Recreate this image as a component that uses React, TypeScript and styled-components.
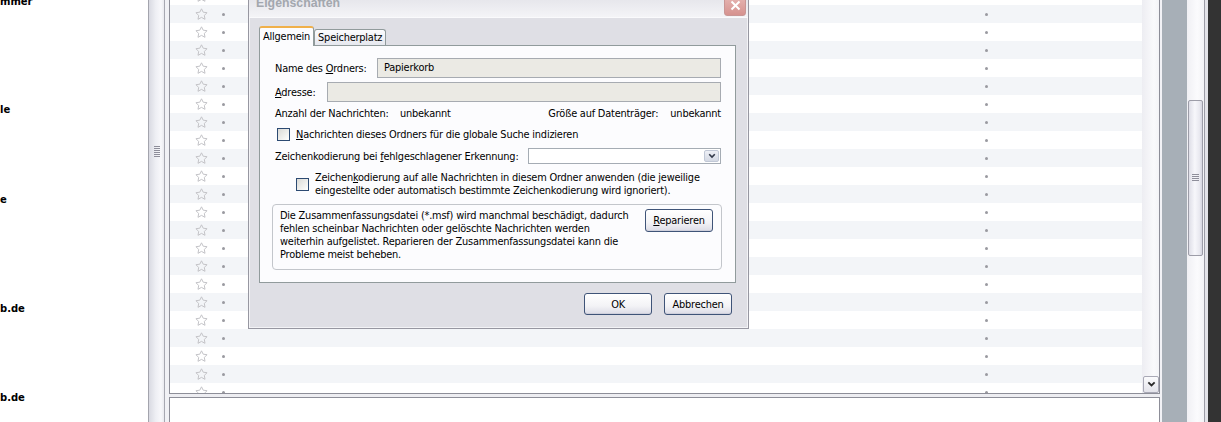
import React from "react";
import styled, { createGlobalStyle } from "styled-components";

const UI_FONT = `"DejaVu Sans", Tahoma, Verdana, sans-serif`;

const GlobalStyle = createGlobalStyle`
  html, body { margin: 0; padding: 0; overflow: hidden; background: #ffffff; }
  body { font-family: ${UI_FONT}; font-size: 9.8px; letter-spacing: -0.2px; color: #000000; }
`;

const Screen = styled.div`
  position: relative;
  display: flex;
  width: 1221px;
  height: 422px;
  overflow: hidden;
  background: #ffffff;
`;

/* ---------- folder pane ---------- */
const FolderPane = styled.div`
  flex: none;
  width: 148px;
  display: flex;
  flex-direction: column;
  overflow: hidden;
  background: #ffffff;
`;

const FolderName = styled.div<{ $space: number }>`
  flex: none;
  margin-top: ${(p) => p.$space}px;
  height: 18px;
  line-height: 18px;
  font-weight: bold;
  font-size: 10px;
  letter-spacing: 0;
  white-space: nowrap;
`;

/* ---------- vertical splitter ---------- */
const VSplitter = styled.div`
  flex: none;
  display: flex;
  width: 21px;
  box-sizing: border-box;
  border-left: 1px solid #a3a4ad;
  background: #f1f1f5;
`;

const GripBar = styled.div`
  flex: none;
  width: 16px;
  box-sizing: border-box;
  display: flex;
  justify-content: center;
  padding-top: 146px;
  background: linear-gradient(to right, #d9dae2, #eeeff4 45%, #f8f8fb 80%, #eaeaef);
  border-right: 1px solid #a7a8b1;
`;

/* ---------- main column ---------- */
const MainColumn = styled.div`
  flex: none;
  width: 991px;
  display: flex;
  flex-direction: column;
`;

const ThreadList = styled.div`
  flex: none;
  height: 394px;
  box-sizing: border-box;
  display: flex;
  border: 1px solid #8d8e98;
  border-top: none;
  background: #ffffff;
  overflow: hidden;
`;

const RowsViewport = styled.div`
  flex: 1;
  overflow: hidden;
`;

const RowsTrack = styled.div`
  display: flex;
  flex-direction: column;
  margin-top: -13px;
`;

const Row = styled.div<{ $alt: boolean }>`
  flex: none;
  display: flex;
  align-items: center;
  height: 18px;
  background: ${(p) => (p.$alt ? "#f3f5f8" : "#ffffff")};
`;

const StarCell = styled.span`
  flex: none;
  display: flex;
  width: 13px;
  height: 13px;
  margin-left: 25px;
`;

const Dot = styled.span<{ $gap: number }>`
  flex: none;
  width: 3px;
  height: 3px;
  border-radius: 50%;
  background: #9a9aa0;
  margin-left: ${(p) => p.$gap}px;
`;

const ListScrollbar = styled.div`
  flex: none;
  width: 17px;
  display: flex;
  flex-direction: column;
  justify-content: flex-end;
  background: linear-gradient(to right, #ededf2, #fafafc 70%, #f4f4f7);
`;

const ArrowButton = styled.div`
  flex: none;
  height: 17px;
  margin-left: 1px;
  box-sizing: border-box;
  display: flex;
  align-items: center;
  justify-content: center;
  border: 1px solid #a9a9b6;
  border-radius: 2px;
  background: linear-gradient(#fbfbfd, #e3e3ea);
`;

const HSplitter = styled.div`
  flex: none;
  height: 3px;
  background: #ededf1;
`;

const MessagePane = styled.div`
  flex: 1;
  box-sizing: border-box;
  border: 1px solid #8d8e98;
  border-bottom: none;
  background: #ffffff;
`;

/* ---------- right strip ---------- */
const SideGap = styled.div`
  flex: none;
  width: 2px;
  background: #f2f2f6;
`;

const SideBand = styled.div`
  flex: none;
  width: 25px;
  background: #a7afb7;
`;

const SideScroll = styled.div`
  flex: none;
  width: 17px;
  display: flex;
  flex-direction: column;
  background: linear-gradient(to right, #f0f0f4, #fbfbfd 60%, #f3f3f6);
`;

const SideThumb = styled.div`
  flex: none;
  height: 156px;
  margin: 100px 1px 0 1px;
  box-sizing: border-box;
  display: flex;
  align-items: center;
  justify-content: center;
  border: 1px solid #9d9da8;
  border-radius: 2px;
  background: linear-gradient(to right, #dedee7, #f7f7fb 45%, #e9e9f0 80%, #d6d6e0);
`;

const SideEdge = styled.div`
  flex: none;
  width: 4px;
  box-sizing: border-box;
  border-left: 1px solid #9c9ca6;
  background: #e3e3e8;
`;

const DarkEdge = styled.div`
  flex: 1;
  background: #333333;
`;

/* ---------- dialog ---------- */
const Dialog = styled.div`
  position: absolute;
  left: 248px;
  top: -7px;
  width: 501px;
  height: 336px;
  box-sizing: border-box;
  display: flex;
  flex-direction: column;
  border: 1px solid #9797a1;
  background: #dfdfe5;
  box-shadow: inset 0 0 0 1px #f3f3f6;
`;

const TitleBar = styled.div`
  flex: none;
  height: 24px;
  box-sizing: border-box;
  display: flex;
  align-items: flex-start;
  padding: 1px 2px 0 7px;
  background: linear-gradient(#e2e2e8, #f4f4f7);
  border-bottom: 1px solid #fafafc;
`;

const TitleText = styled.div`
  font-family: "Liberation Sans", Arial, sans-serif;
  font-weight: bold;
  font-size: 12.3px;
  letter-spacing: 0;
  line-height: 16px;
  color: #a3a7ae;
`;

const CloseButton = styled.div`
  flex: none;
  margin-left: auto;
  width: 22px;
  height: 21px;
  box-sizing: border-box;
  display: flex;
  align-items: center;
  justify-content: center;
  border: 1px solid #c99695;
  border-radius: 3px;
  background: linear-gradient(#e6b7b4, #d6928f);
`;

const DialogBody = styled.div`
  flex: 1;
  display: flex;
  flex-direction: column;
  padding: 8px 12px 0 10px;
`;

const TabStrip = styled.div`
  flex: none;
  height: 19px;
  display: flex;
  align-items: flex-end;
  position: relative;
  z-index: 1;
`;

const Tab = styled.div<{ $active?: boolean }>`
  flex: none;
  box-sizing: border-box;
  height: ${(p) => (p.$active ? 20 : 16)}px;
  margin-bottom: ${(p) => (p.$active ? -1 : 0)}px;
  padding: ${(p) => (p.$active ? "0 3px" : "0 3px")};
  line-height: ${(p) => (p.$active ? 17 : 15)}px;
  border: 1px solid #919b9c;
  border-bottom: none;
  border-top: ${(p) => (p.$active ? "2px solid #f0b04a" : "1px solid #919b9c")};
  border-radius: 3px 3px 0 0;
  background: ${(p) => (p.$active ? "#fcfcfe" : "linear-gradient(#fbfbfd, #e6e8ef)")};
  white-space: nowrap;
`;

const TabPanel = styled.div`
  flex: none;
  height: 238px;
  box-sizing: border-box;
  display: flex;
  flex-direction: column;
  padding: 12px 14px 0 15px;
  border: 1px solid #919b9c;
  background: #fcfcfe;
`;

const FieldRow = styled.div<{ $top: number; $h?: number }>`
  flex: none;
  display: flex;
  align-items: center;
  height: ${(p) => p.$h ?? 20}px;
  margin-top: ${(p) => p.$top}px;
  white-space: nowrap;
`;

const FieldLabel = styled.span<{ $w: number }>`
  flex: none;
  width: ${(p) => p.$w}px;
`;

const ReadOnlyInput = styled.div`
  flex: 1;
  height: 20px;
  box-sizing: border-box;
  padding-left: 6px;
  line-height: 18px;
  border: 1px solid #a7abb1;
  background: #ebeae4;
`;

const InfoGroup = styled.div<{ $push?: boolean }>`
  display: flex;
  gap: 12px;
  margin-left: ${(p) => (p.$push ? "auto" : "0")};
`;

const InfoLabel = styled.span<{ $w?: number }>`
  ${(p) => (p.$w ? `width: ${p.$w}px;` : "")}
`;

const CheckBox = styled.span<{ $indent: number }>`
  flex: none;
  width: 13px;
  height: 13px;
  box-sizing: border-box;
  margin-left: ${(p) => p.$indent}px;
  margin-right: 6px;
  border: 1px solid #2c4a72;
  background: linear-gradient(135deg, #dadad6, #f6f6f4 75%, #ffffff);
`;

const MultiLine = styled.div`
  line-height: 13px;
`;

const SelectBox = styled.div`
  flex: 1;
  height: 16px;
  box-sizing: border-box;
  display: flex;
  justify-content: flex-end;
  align-items: center;
  padding-right: 1px;
  border: 1px solid #a5acb4;
  background: #ffffff;
`;

const SelectButton = styled.div`
  flex: none;
  width: 15px;
  height: 12px;
  display: flex;
  align-items: center;
  justify-content: center;
  border-radius: 2px;
  background: linear-gradient(#eef0f6, #d4d9e4);
  border: 1px solid #c1c8d6;
  box-sizing: border-box;
`;

const GroupBox = styled.div`
  flex: none;
  height: 66px;
  margin: 7px -1px 0 -3px;
  box-sizing: border-box;
  display: flex;
  align-items: flex-start;
  padding: 4px 8px 0 7px;
  border: 1px solid #c3c6cb;
  border-radius: 4px;
`;

const GroupText = styled.div`
  flex: 1;
  line-height: 13px;
  white-space: nowrap;
`;

const PushButton = styled.div<{ $h?: number }>`
  flex: none;
  width: 68px;
  height: ${(p) => p.$h ?? 22}px;
  box-sizing: border-box;
  display: flex;
  align-items: center;
  justify-content: center;
  border: 1px solid #3f5478;
  border-radius: 3px;
  background: linear-gradient(#ffffff, #f3f3f6 60%, #dcdce6);
  box-shadow: inset 0 -1px 0 #cfd0dc;
  white-space: nowrap;
`;

const ButtonRow = styled.div`
  flex: none;
  display: flex;
  justify-content: flex-end;
  gap: 12px;
  margin-top: 10px;
  padding-right: 4px;
`;

/* ---------- icons ---------- */
const StarIcon = () => (
  <svg width="13" height="13" viewBox="0 0 13 13">
    <polygon
      points="6.5,0.8 8.2,4.2 12.1,4.7 9.3,7.4 10,11.3 6.5,9.4 3,11.3 3.7,7.4 0.9,4.7 4.8,4.2"
      fill="none"
      stroke="#c4c4c8"
      strokeWidth="1"
      strokeLinejoin="round"
    />
  </svg>
);

const Chevron = ({ size = 10, color = "#2a2a2a" }: { size?: number; color?: string }) => (
  <svg width={size} height={size * 0.7} viewBox="0 0 10 7">
    <path d="M1.5 1.5 L5 5 L8.5 1.5" fill="none" stroke={color} strokeWidth="2" />
  </svg>
);

const GripLines = ({ w, count }: { w: number; count: number }) => (
  <svg width={w} height={count * 2} viewBox={`0 0 ${w} ${count * 2}`}>
    {Array.from({ length: count }, (_, i) => (
      <rect key={i} x="0" y={i * 2} width={w} height="1" fill="#8e8e9a" />
    ))}
  </svg>
);

const CloseX = () => (
  <svg width="11" height="11" viewBox="0 0 11 11">
    <path d="M1.5 1.5 L9.5 9.5 M9.5 1.5 L1.5 9.5" stroke="#ffffff" strokeWidth="2" />
  </svg>
);

const folders: { text: string; space: number }[] = [
  { text: "mmer", space: -7 },
  { text: "le", space: 90 },
  { text: "e", space: 72 },
  { text: "b.de", space: 91 },
  { text: "b.de", space: 71 },
];

export default function App() {
  const rows = Array.from({ length: 23 }, (_, i) => i);
  return (
    <>
      <GlobalStyle />
      <Screen>
        <FolderPane>
          {folders.map((f, i) => (
            <FolderName key={i} $space={f.space}>
              {f.text}
            </FolderName>
          ))}
        </FolderPane>

        <VSplitter>
          <GripBar>
            <GripLines w={6} count={6} />
          </GripBar>
        </VSplitter>

        <MainColumn>
          <ThreadList>
            <RowsViewport>
              <RowsTrack>
                {rows.map((i) => (
                  <Row key={i} $alt={i % 2 === 1}>
                    <StarCell>
                      <StarIcon />
                    </StarCell>
                    <Dot $gap={14} />
                    <Dot $gap={760} />
                  </Row>
                ))}
              </RowsTrack>
            </RowsViewport>
            <ListScrollbar>
              <ArrowButton>
                <Chevron size={9} />
              </ArrowButton>
            </ListScrollbar>
          </ThreadList>
          <HSplitter />
          <MessagePane />
        </MainColumn>

        <SideGap />
        <SideBand />
        <SideScroll>
          <SideThumb>
            <GripLines w={7} count={4} />
          </SideThumb>
        </SideScroll>
        <SideEdge />
        <DarkEdge />

        <Dialog>
          <TitleBar>
            <TitleText>Eigenschaften</TitleText>
            <CloseButton>
              <CloseX />
            </CloseButton>
          </TitleBar>
          <DialogBody>
            <TabStrip>
              <Tab $active>Allgemein</Tab>
              <Tab>Speicherplatz</Tab>
            </TabStrip>
            <TabPanel>
              <FieldRow $top={0}>
                <FieldLabel $w={102}>
                  Name des <u>O</u>rdners:
                </FieldLabel>
                <ReadOnlyInput>Papierkorb</ReadOnlyInput>
              </FieldRow>
              <FieldRow $top={4}>
                <FieldLabel $w={52}>
                  <u>A</u>dresse:
                </FieldLabel>
                <ReadOnlyInput />
              </FieldRow>
              <FieldRow $top={2} $h={19}>
                <InfoGroup>
                  <InfoLabel $w={113}>Anzahl der Nachrichten:</InfoLabel>
                  <span>unbekannt</span>
                </InfoGroup>
                <InfoGroup $push>
                  <InfoLabel>Größe auf Datenträger:</InfoLabel>
                  <span>unbekannt</span>
                </InfoGroup>
              </FieldRow>
              <FieldRow $top={1}>
                <CheckBox $indent={2} />
                <span>
                  <u>N</u>achrichten dieses Ordners für die globale Suche indizieren
                </span>
              </FieldRow>
              <FieldRow $top={4} $h={16}>
                <FieldLabel $w={253}>
                  Zeichenkodierung bei <u>f</u>ehlgeschlagener Erkennung:
                </FieldLabel>
                <SelectBox>
                  <SelectButton>
                    <Chevron size={8} color="#333a4a" />
                  </SelectButton>
                </SelectBox>
              </FieldRow>
              <FieldRow $top={7} $h={26}>
                <CheckBox $indent={21} />
                <MultiLine>
                  Zeichen<u>k</u>odierung auf alle Nachrichten in diesem Ordner anwenden (die jeweilige
                  <br />
                  eingestellte oder automatisch bestimmte Zeichenkodierung wird ignoriert).
                </MultiLine>
              </FieldRow>
              <GroupBox>
                <GroupText>
                  Die Zusammenfassungsdatei (*.msf) wird manchmal beschädigt, dadurch
                  <br />
                  fehlen scheinbar Nachrichten oder gelöschte Nachrichten werden
                  <br />
                  weiterhin aufgelistet. Reparieren der Zusammenfassungsdatei kann die
                  <br />
                  Probleme meist beheben.
                </GroupText>
                <PushButton $h={23}>
                  <span>
                    <u>R</u>eparieren
                  </span>
                </PushButton>
              </GroupBox>
            </TabPanel>
            <ButtonRow>
              <PushButton>OK</PushButton>
              <PushButton>Abbrechen</PushButton>
            </ButtonRow>
          </DialogBody>
        </Dialog>
      </Screen>
    </>
  );
}
